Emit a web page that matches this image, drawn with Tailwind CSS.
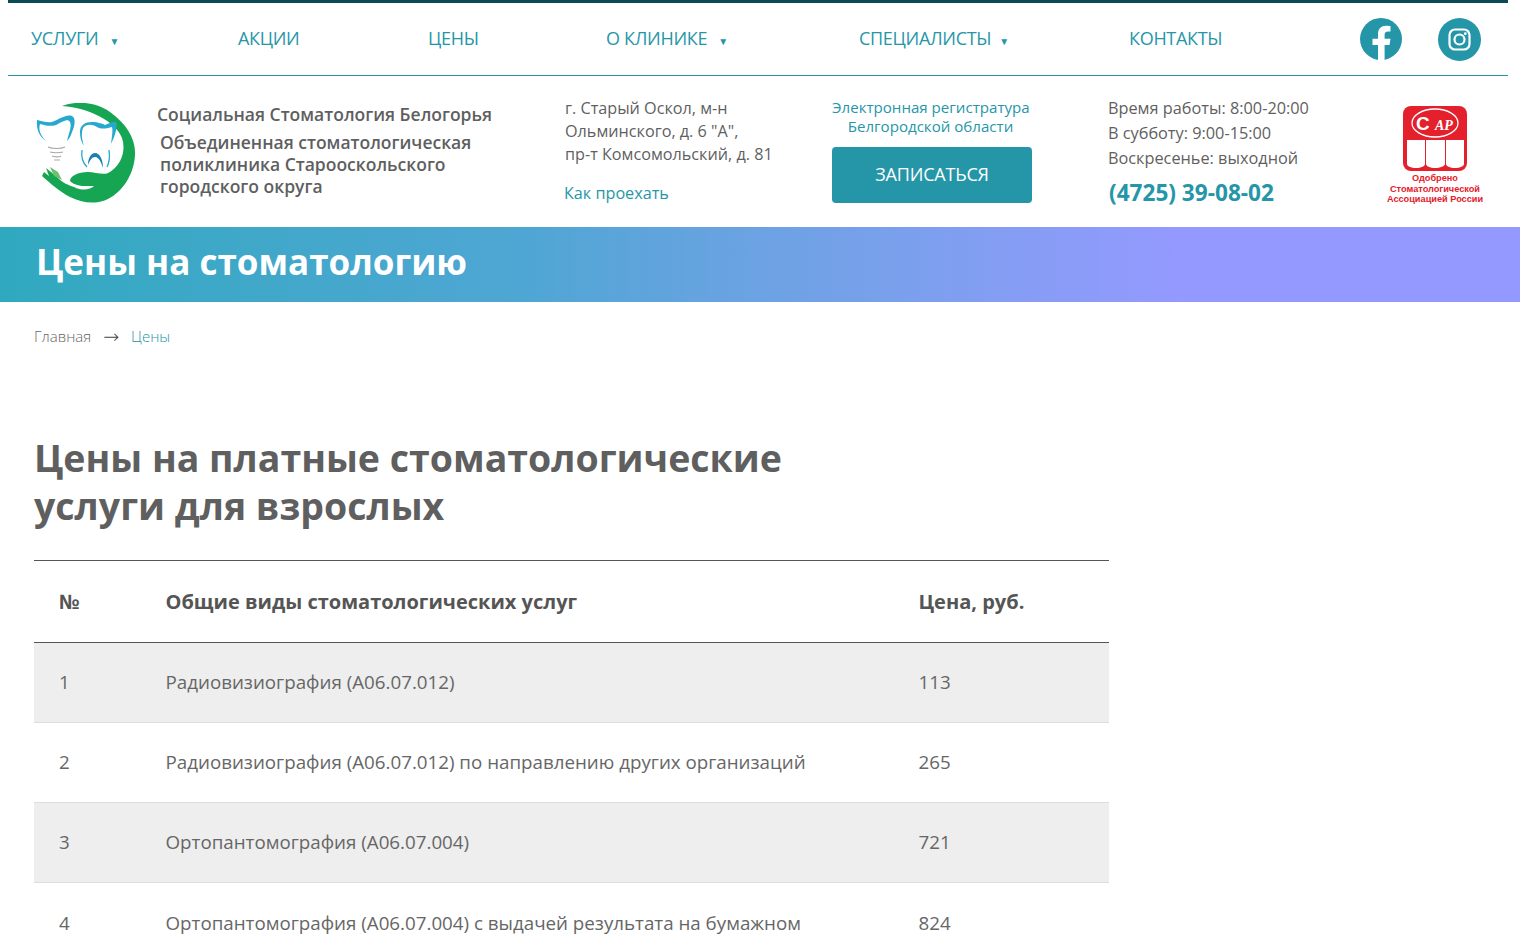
<!DOCTYPE html>
<html lang="ru">
<head>
  <meta charset="UTF-8">
  <title>Цены на стоматологию</title>
  <script src="https://cdn.jsdelivr.net/npm/@tailwindcss/browser@4"></script>
</head>
<body class="bg-white font-['Open_Sans',sans-serif] text-[#5f5f5f] overflow-hidden h-[943px]">
  <!-- top menu -->
  <nav class="ml-2 w-[1500px] h-[76px] flex flex-col">
    <div class="h-[3px] bg-[#0b4a55]"></div>
    <div class="flex-1 flex items-start text-[18px] leading-[25px] text-[#2596a8] tracking-[-0.3px]">
      <a class="ml-[23px] mt-[23px] w-[207px] flex">УСЛУГИ<span class="ml-[11px] mt-[3px] text-[10px]">▼</span></a>
      <a class="mt-[23px] w-[190px]">АКЦИИ</a>
      <a class="mt-[23px] w-[178px]">ЦЕНЫ</a>
      <a class="mt-[23px] w-[253px] flex">О КЛИНИКЕ<span class="ml-[11px] mt-[3px] text-[10px]">▼</span></a>
      <a class="mt-[23px] w-[270px] flex">СПЕЦИАЛИСТЫ<span class="ml-[8px] mt-[3px] text-[10px]">▼</span></a>
      <a class="mt-[23px] w-[231px]">КОНТАКТЫ</a>
      <svg class="mt-[15px] w-[42px] h-[42px] shrink-0" viewBox="0 0 42 42">
        <circle cx="21" cy="21" r="21" fill="#2596a8"/>
        <path d="M18 42V27h-5.500v-6.200H18v-4.700c0-5.400 3.200-8.400 8.100-8.400 2.300 0 4.400.4 4.400.4v5.300h-2.500c-2.600 0-3.400 1.600-3.400 3.300v4.100h5.900l-1 6.200h-4.900V42z" fill="#fff"/>
      </svg>
      <svg class="ml-[36px] mt-[15px] w-[43px] h-[43px] shrink-0" viewBox="0 0 43 43">
        <circle cx="21.500" cy="21.500" r="21.500" fill="#2596a8"/>
        <rect x="11.500" y="11.500" width="20" height="20" rx="5.500" fill="none" stroke="#fff" stroke-width="2.200"/>
        <circle cx="21.500" cy="21.500" r="5" fill="none" stroke="#fff" stroke-width="2.200"/>
        <circle cx="27.300" cy="15.700" r="1.400" fill="#fff"/>
      </svg>
    </div>
    <div class="h-px bg-[#2596a8]"></div>
  </nav>

  <!-- header -->
  <header class="h-[151px] flex items-start">
    <svg class="ml-[35px] mt-[27px] w-[102px] h-[100px] shrink-0" viewBox="35 103 102 100">
      <path d="M62 106C75 101 95 101 110 112C127 124 136 140 135 155C134 175 122 192 108 199C95 205 82 203 70 197C60 192 50 183 42 176L44 172L49 176L46 168L51 172L58 178C63 183 68 185 74 187C82 191 90 190 94 186C86 186 76 187 70 181C70 176 78 172 88 172C96 172 104 176 110 172C122 164 126 150 122 138C116 122 90 108 62 106Z" fill="#16a552"/>
      <path d="M50 167L58 172L62 180L54 176Z" fill="#6cc070"/>
      <path d="M37 120C42 121 47 123 52 122C60 119 66 114 72 116C76 118 75 126 72 132C71 136 69 139 67 141C69 133 72 126 70 122C68 118 62 122 56 125C50 127 44 125 40 124C38 130 41 136 46 141C40 137 36 130 37 120Z" fill="#27a8d0"/>
      <path d="M80 132C80 125 85 122 92 122C98 122 103 124 105 125C109 124 112 121 116 122C118 128 114 138 111 144C112 136 113 130 112 127C108 128 102 130 97 127C92 124 86 124 83 128C81 133 82 140 84 146C81 142 80 137 80 132Z" fill="#27a8d0"/>
      <path d="M82 150C81 157 83 163 87 167M109 150C110 157 109 163 107 167" fill="none" stroke="#27a8d0" stroke-width="1.300"/>
      <path d="M88 165C88 158 91 153 95 153C100 153 103 160 103 168C101 162 99 157 95 157C92 157 90 160 88 165Z" fill="#1b7fb5"/>
      <path d="M48 147C52 149 61 149 65 147M50 152C53 153 60 153 63 152M52 156C55 157 59 157 61 156M54 160H60" fill="none" stroke="#a9a9a9" stroke-width="1.200"/>
    </svg>
    <div class="ml-[20px] w-[408px] shrink-0 text-[#5f5f5f] font-semibold text-[17.500px]">
      <p class="mt-[26px] leading-[24px]">Социальная Стоматология Белогорья</p>
      <p class="mt-[5px] ml-[3px] leading-[22px]">Объединенная стоматологическая<br>поликлиника Старооскольского<br>городского округа</p>
    </div>
    <div class="w-[267px] shrink-0 text-[16.200px] leading-[23px] pt-[21px]">
      <p>г. Старый Оскол, м-н<br>Ольминского, д. 6 "А",<br>пр-т Комсомольский, д. 81</p>
      <a class="block mt-[16px] -ml-px text-[#2596a8]">Как проехать</a>
    </div>
    <div class="w-[276px] shrink-0 pt-[22px]">
      <p class="w-[197px] whitespace-nowrap text-center text-[15.100px] leading-[19px] text-[#2596a8]">Электронная регистратура<br>Белгородской области</p>
      <a class="mt-[11px] w-[200px] h-[56px] pb-[2px] rounded-[4px] bg-[#2596a8] text-white text-[18px] tracking-[-0.2px] flex items-center justify-center">ЗАПИСАТЬСЯ</a>
    </div>
    <div class="w-[279px] shrink-0 pt-[20px] text-[16.300px] leading-[25px]">
      <p>Время работы: 8:00-20:00</p>
      <p>В субботу: 9:00-15:00</p>
      <p>Воскресенье: выходной</p>
      <p class="mt-[6px] ml-px text-[22.600px] leading-[31px] font-bold text-[#2596a8]">(4725) 39-08-02</p>
    </div>
    <div class="w-[96px] shrink-0 pt-[30px] flex flex-col items-center font-['Liberation_Sans',sans-serif] text-[9.200px] leading-[10.500px] font-bold text-[#e3202c]">
      <svg class="w-[64px] h-[65px]" viewBox="0 0 64 65">
        <rect width="64" height="65" rx="8" fill="#e3202c"/>
        <ellipse cx="32" cy="17" rx="23" ry="14" fill="none" stroke="#fff" stroke-width="1.300"/>
        <text x="13" y="24" font-family="Liberation Sans" font-size="19" fill="#fff">С</text>
        <text x="32" y="24" font-family="Liberation Serif" font-style="italic" font-size="14" fill="#fff">АР</text>
        <path d="M4 34H22V58C22 60 18 62 13 62C8 62 4 60 4 58Z" fill="#fff"/>
        <path d="M23 34H42V58C42 60 37 62 32 62C27 62 23 60 23 58Z" fill="#fff"/>
        <path d="M43 34H61V58C61 60 57 62 52 62C47 62 43 60 43 58Z" fill="#fff"/>
      </svg>
      <p class="mt-[2px] text-center whitespace-nowrap">Одобрено<br>Стоматологической<br>Ассоциацией России</p>
    </div>
  </header>

  <!-- page title band -->
  <div class="h-[75px] pb-[4px] bg-linear-to-r from-[#2fa9bf] via-[#4fa6d4] via-35% to-[#9499ff] to-78% pl-[36px] flex items-center">
    <p class="text-[35px] font-bold text-white">Цены на стоматологию</p>
  </div>

  <main class="pl-[34px] w-[1109px]">
    <div class="mt-[24px] h-[20px] flex items-center text-[15px] leading-[20px] font-light text-[#666]">
      <a>Главная</a>
      <span class="mx-[12px] text-[#444] text-[19px] leading-none font-['DejaVu_Sans',sans-serif]">→</span>
      <a class="text-[#2596a8]">Цены</a>
    </div>

    <h1 class="mt-[88px] text-[37.500px] leading-[48px] font-bold text-[#5f5f5f]">Цены на платные стоматологические<br>услуги для взрослых</h1>

    <table class="mt-[30px] w-[1075px] table-fixed border-t border-t-[#555] text-[18.750px] text-[#666]">
      <thead>
        <tr class="h-[82px] border-b border-b-[#555] text-[#555] text-[20px]">
          <th class="w-[131.500px] pl-[25px] text-left font-bold">№</th>
          <th class="w-[753px] text-left font-bold">Общие виды стоматологических услуг</th>
          <th class="text-left font-bold">Цена, руб.</th>
        </tr>
      </thead>
      <tbody>
        <tr class="h-[80px] bg-[#eeeeee] border-b border-b-[#ddd]">
          <td class="pl-[25px]">1</td>
          <td>Радиовизиография (А06.07.012)</td>
          <td>113</td>
        </tr>
        <tr class="h-[80px] border-b border-b-[#ddd]">
          <td class="pl-[25px]">2</td>
          <td>Радиовизиография (А06.07.012) по направлению других организаций</td>
          <td>265</td>
        </tr>
        <tr class="h-[80px] bg-[#eeeeee] border-b border-b-[#ddd]">
          <td class="pl-[25px]">3</td>
          <td>Ортопантомография (А06.07.004)</td>
          <td>721</td>
        </tr>
        <tr class="h-[80px]">
          <td class="pl-[25px]">4</td>
          <td>Ортопантомография (А06.07.004) с выдачей результата на бумажном</td>
          <td>824</td>
        </tr>
      </tbody>
    </table>
  </main>
</body>
</html>
